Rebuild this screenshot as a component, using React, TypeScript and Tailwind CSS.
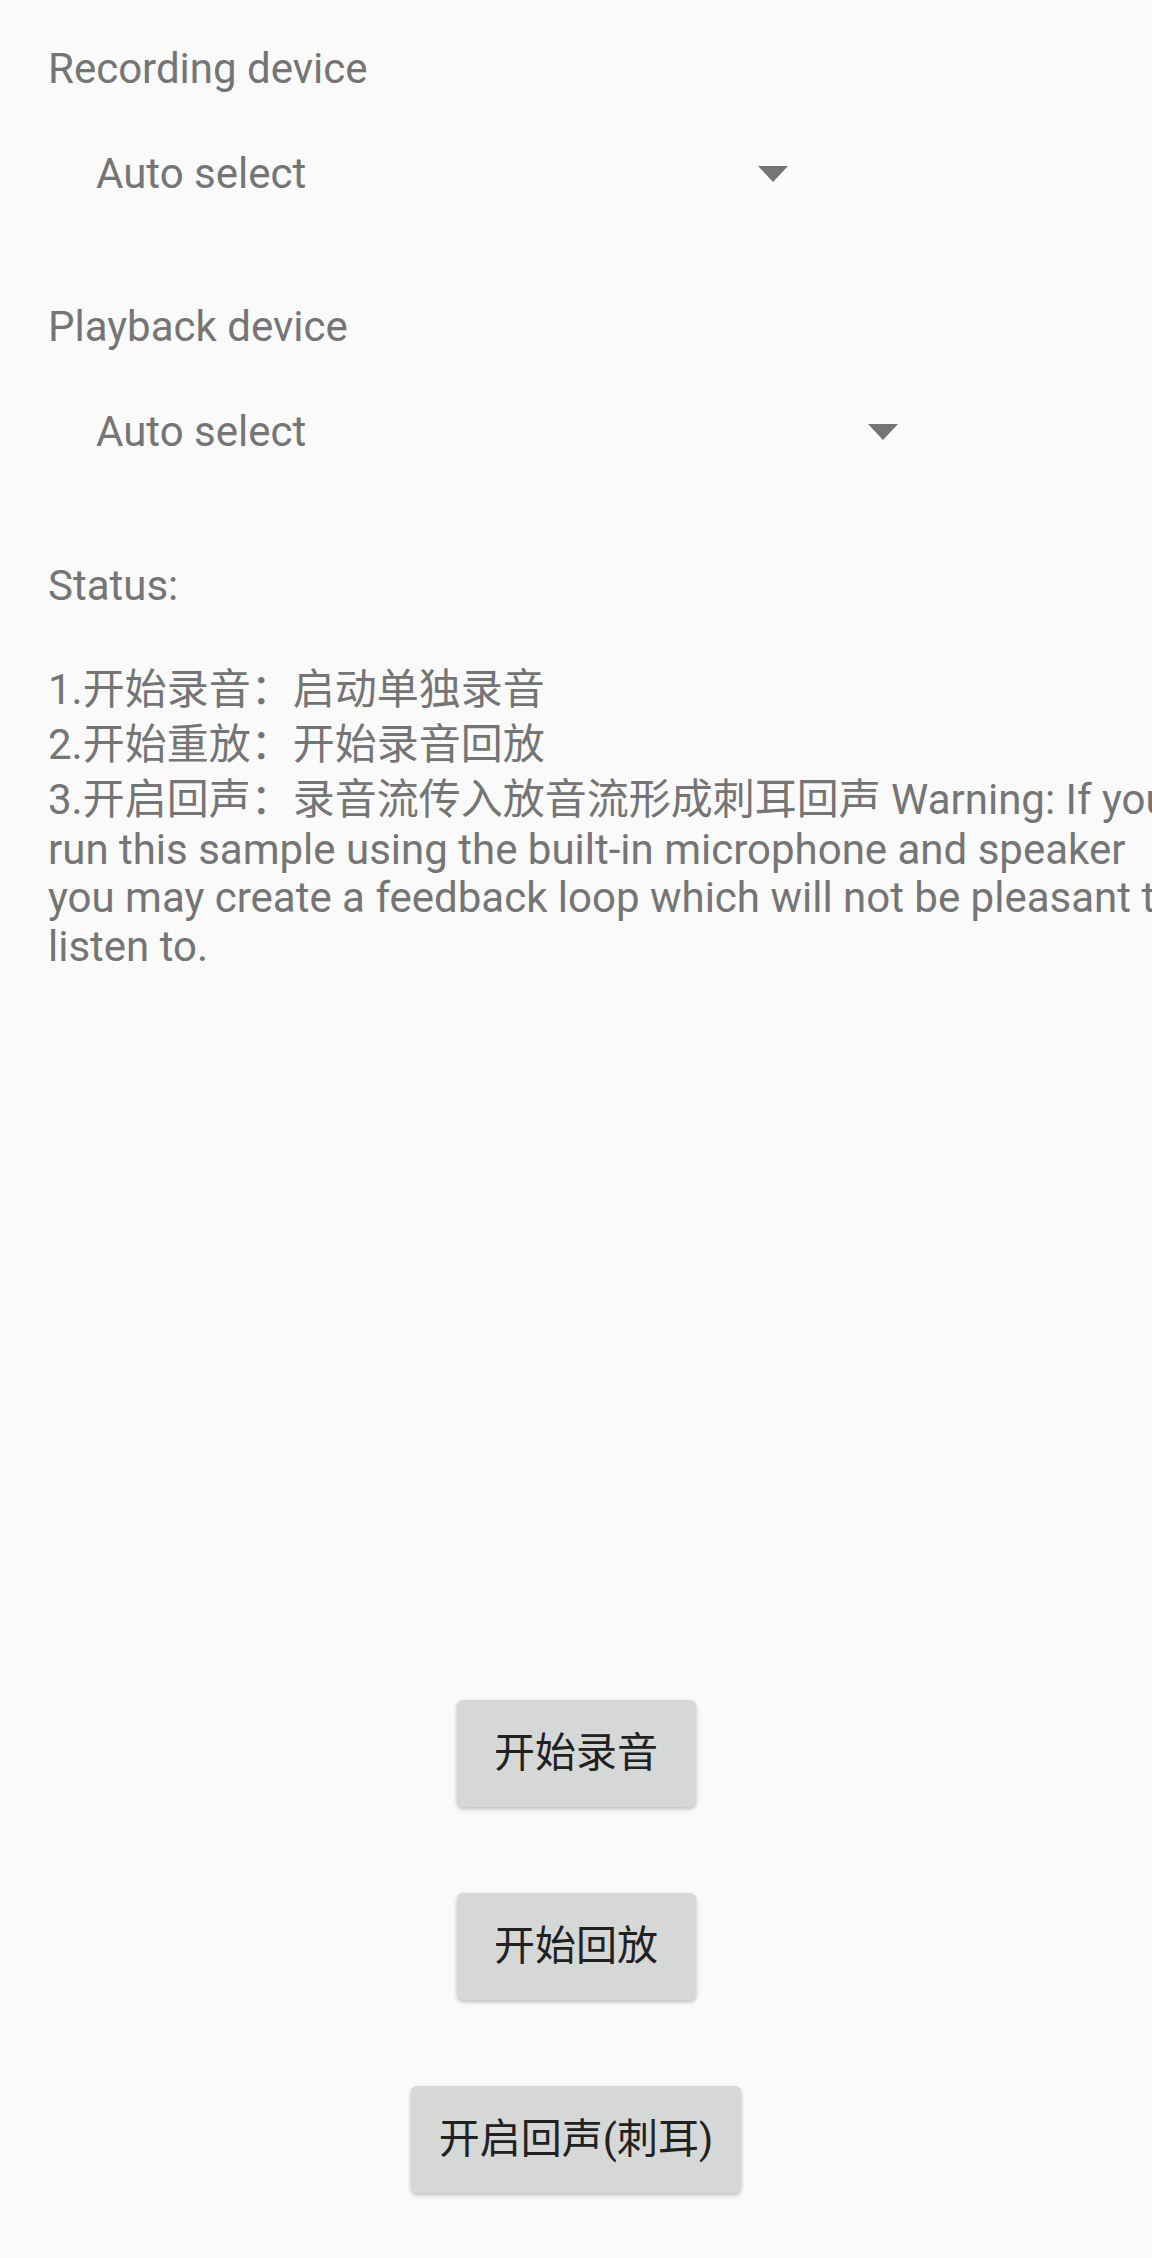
import React from 'react';

const font = { fontFamily: 'Roboto, "Noto Sans CJK SC", sans-serif' };

const Arrow = () => (
  <svg width="30" height="16" viewBox="0 0 30 16" className="shrink-0">
    <path d="M0 0 L30 0 L15 16 Z" fill="#757575" />
  </svg>
);

const Spinner = ({ width }: { width: string }) => (
  <div className={`flex items-center justify-between pl-[48px] pr-[12px] ${width}`}>
    <span className="leading-[49px]">Auto select</span>
    <Arrow />
  </div>
);

const ActionButton = ({ label, width }: { label: string; width: string }) => (
  <button
    className={`h-[107px] ${width} rounded-[6px] bg-[#d6d7d7] text-[#212121] text-[41px] shadow-[0_2px_4px_rgba(0,0,0,0.25)]`}
  >
    {label}
  </button>
);

export default function App() {
  return (
    <div
      className="w-[1152px] h-[2258px] overflow-hidden bg-[#fafafa] text-[#757575] text-[42px] flex flex-col"
      style={font}
    >
      <div className="pl-[48px] pt-[44px] flex flex-col">
        <div className="leading-[49px]">Recording device</div>
        <div className="mt-[56px]">
          <Spinner width="w-[752px]" />
        </div>
        <div className="mt-[104px] leading-[49px]">Playback device</div>
        <div className="mt-[56px]">
          <Spinner width="w-[862px]" />
        </div>

        {/* status text, clipped at the right edge like the device shows it */}
        <div className="mt-[105px] flex flex-col whitespace-nowrap">
          <div className="leading-[49px]">Status:</div>
          <div className="h-[52px]" />
          <div className="leading-[55px]">1.开始录音：启动单独录音</div>
          <div className="leading-[55px]">2.开始重放：开始录音回放</div>
          <div className="leading-[55px]">3.开启回声：录音流传入放音流形成刺耳回声 Warning: If you</div>
          <div className="leading-[46px]">run this sample using the built-in microphone and speaker</div>
          <div className="leading-[49px]">you may create a feedback loop which will not be pleasant to</div>
          <div className="leading-[49px]">listen to.</div>
        </div>
      </div>

      <div className="mt-auto pb-[65px] flex flex-col items-center gap-[86px]">
        <ActionButton label="开始录音" width="w-[239px]" />
        <ActionButton label="开始回放" width="w-[239px]" />
        <ActionButton label="开启回声(刺耳)" width="w-[330px]" />
      </div>
    </div>
  );
}
